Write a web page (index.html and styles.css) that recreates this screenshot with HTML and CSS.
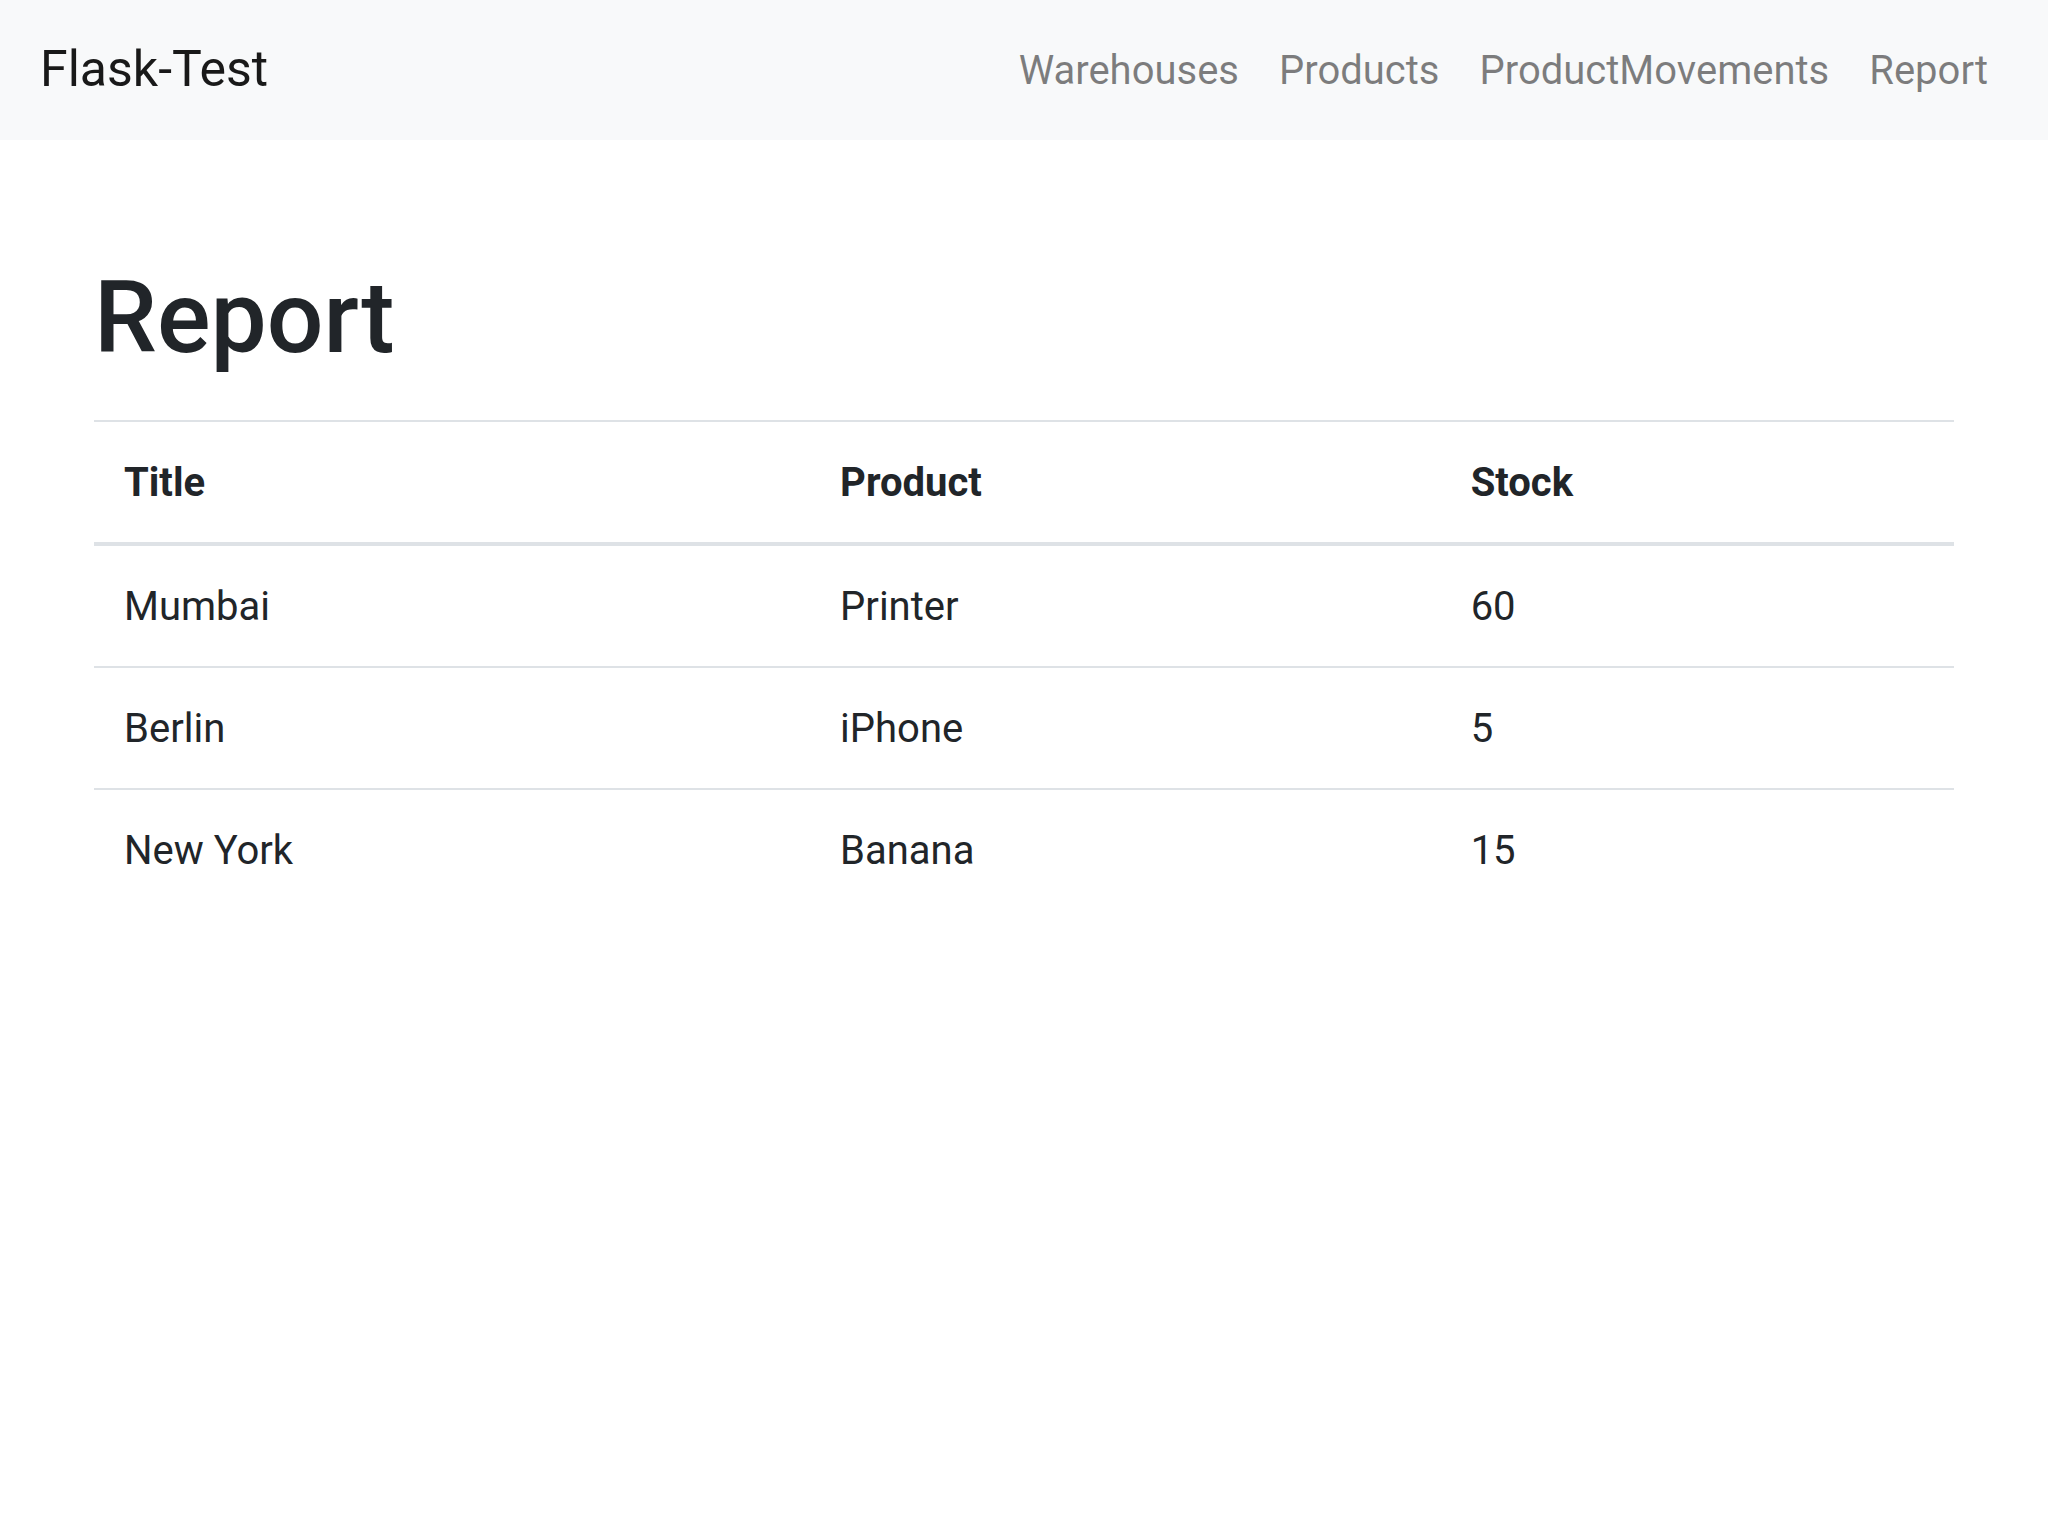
FILE: index.html
```html
<!DOCTYPE html>
<html lang="en">
<head>
<meta charset="utf-8">
<meta name="viewport" content="width=device-width, initial-scale=1">
<title>Flask-Test</title>
<link rel="stylesheet" href="styles.css">
</head>
<body>
<nav class="navbar">
  <a class="navbar-brand" href="#">Flask-Test</a>
  <ul class="navbar-nav">
    <li><a class="nav-link" href="#">Warehouses</a></li>
    <li><a class="nav-link" href="#">Products</a></li>
    <li><a class="nav-link" href="#">ProductMovements</a></li>
    <li><a class="nav-link" href="#">Report</a></li>
  </ul>
</nav>
<main class="content">
  <h1 class="title">Report</h1>
  <table class="table">
    <colgroup>
      <col class="col-title">
      <col class="col-product">
      <col>
    </colgroup>
    <thead>
      <tr><th scope="col">Title</th><th scope="col">Product</th><th scope="col">Stock</th></tr>
    </thead>
    <tbody>
      <tr><td>Mumbai</td><td>Printer</td><td>60</td></tr>
      <tr><td>Berlin</td><td>iPhone</td><td>5</td></tr>
      <tr><td>New York</td><td>Banana</td><td>15</td></tr>
    </tbody>
  </table>
</main>
</body>
</html>
```

FILE: styles.css
```css
*, *::before, *::after {
  box-sizing: border-box;
}

body {
  margin: 0;
  background: #fff;
  color: #212529;
  font-family: Roboto, sans-serif;
  font-size: 40px;
  line-height: 60px;
}

.navbar {
  display: flex;
  align-items: center;
  justify-content: space-between;
  padding: 20px 40px;
  background: #f8f9fa;
}

.navbar-brand {
  padding-bottom: 2px;
  color: rgba(0, 0, 0, 0.9);
  font-size: 50px;
  line-height: 75px;
  text-decoration: none;
}

.navbar-nav {
  display: flex;
  margin: 0;
  padding: 0;
  list-style: none;
}

.nav-link {
  display: block;
  padding: 21px 20px 19px;
  color: rgba(0, 0, 0, 0.5);
  text-decoration: none;
}

.content {
  padding: 118px 94px;
}

.title {
  margin: 0 0 42px;
  font-size: 100px;
  font-weight: 500;
  line-height: 120px;
}

.table {
  width: 100%;
  border-collapse: collapse;
}

.col-title {
  width: 38.5%;
}

.col-product {
  width: 33.9%;
}

.table th,
.table td {
  padding: 31px 30px 29px;
  border-top: 2px solid #dee2e6;
  text-align: left;
}

.table thead th {
  border-bottom: 4px solid #dee2e6;
}
```
